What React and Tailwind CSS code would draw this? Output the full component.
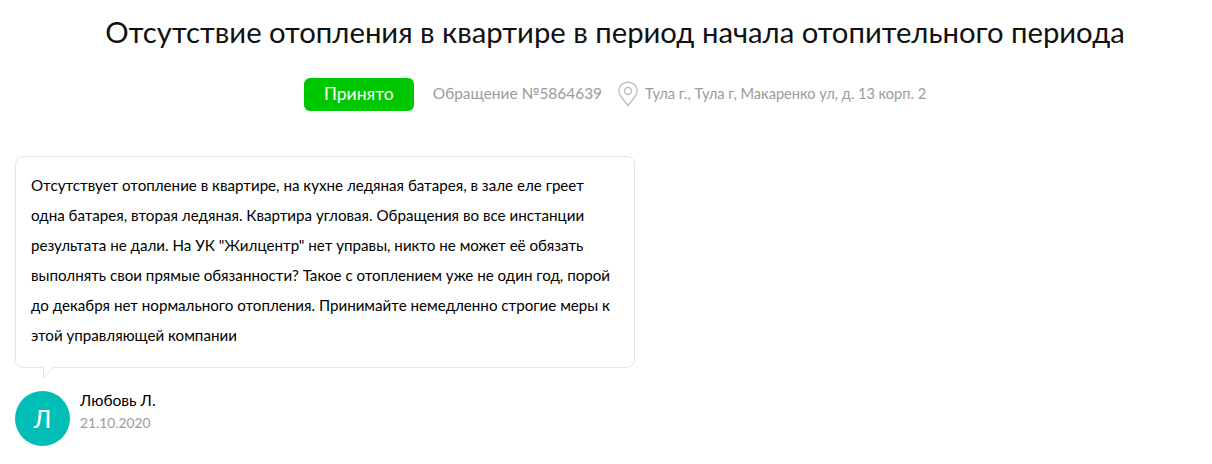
import React from 'react';

const font = "font-['Lato',sans-serif]";

export default function App() {
  return (
    <div className={`w-[1212px] h-[464px] bg-white overflow-hidden ${font}`}>
      <h1 className="pt-[13px] pl-[18px] text-center text-[29.25px] leading-[38px] text-[#111] font-normal">
        Отсутствие отопления в квартире в период начала отопительного периода
      </h1>
      <div className="mt-[26px] pl-[18px] flex items-center justify-center h-[34px] text-[#9b9b9b]">
        <span className="w-[110px] h-[33px] flex items-center justify-center rounded-[6px] bg-[#00c800] text-white text-[17.5px]">Принято</span>
        <span className="ml-[19px] text-[15.45px]">Обращение №5864639</span>
        <svg className="ml-[15px] mr-[6px]" width="22" height="26" viewBox="0 0 22 26" fill="none" stroke="#bdbdbd" strokeWidth="1.4">
          <path d="M11 24.500C7 19 1.800 14.500 1.800 10a9.200 8.800 0 0 1 18.400 0c0 4.500-5.200 9-9.200 14.500z" />
          <circle cx="11" cy="10" r="3.500" />
        </svg>
        <span className="text-[14.6px]">Тула г., Тула г, Макаренко ул, д. 13 корп. 2</span>
      </div>
      <div className="relative ml-[15px] mt-[45px] w-[620px] h-[212px] rounded-[8px] border border-[#e6e6e6] pl-[15px] pr-[17px] pt-[13px] text-[15.15px] leading-[30px] text-black">
        Отсутствует отопление в квартире, на кухне ледяная батарея, в зале еле греет одна батарея, вторая ледяная. Квартира угловая. Обращения во все инстанции результата не дали. На УК "Жилцентр" нет управы, никто не может её обязать выполнять свои прямые обязанности? Такое с отоплением уже не один год, порой до декабря нет нормального отопления. Принимайте немедленно строгие меры к этой управляющей компании
        <svg className="absolute left-[26px] top-[209px]" width="14" height="14" viewBox="0 0 14 14" fill="white" stroke="#e6e6e6">
          <path d="M1.500 0V11.500L13 0" />
        </svg>
      </div>
      <div className="ml-[15px] mt-[23px] flex">
        <div className="w-[55px] h-[55px] rounded-full bg-[#00bdb5] text-white text-[24px] font-medium flex items-center justify-center">Л</div>
        <div className="ml-[10px]">
          <div className="-mt-[1px] text-[15.6px] leading-[20px] text-black">Любовь Л.</div>
          <div className="mt-[3px] text-[13.8px] leading-[20px] text-[#9b9b9b]">21.10.2020</div>
        </div>
      </div>
    </div>
  );
}
